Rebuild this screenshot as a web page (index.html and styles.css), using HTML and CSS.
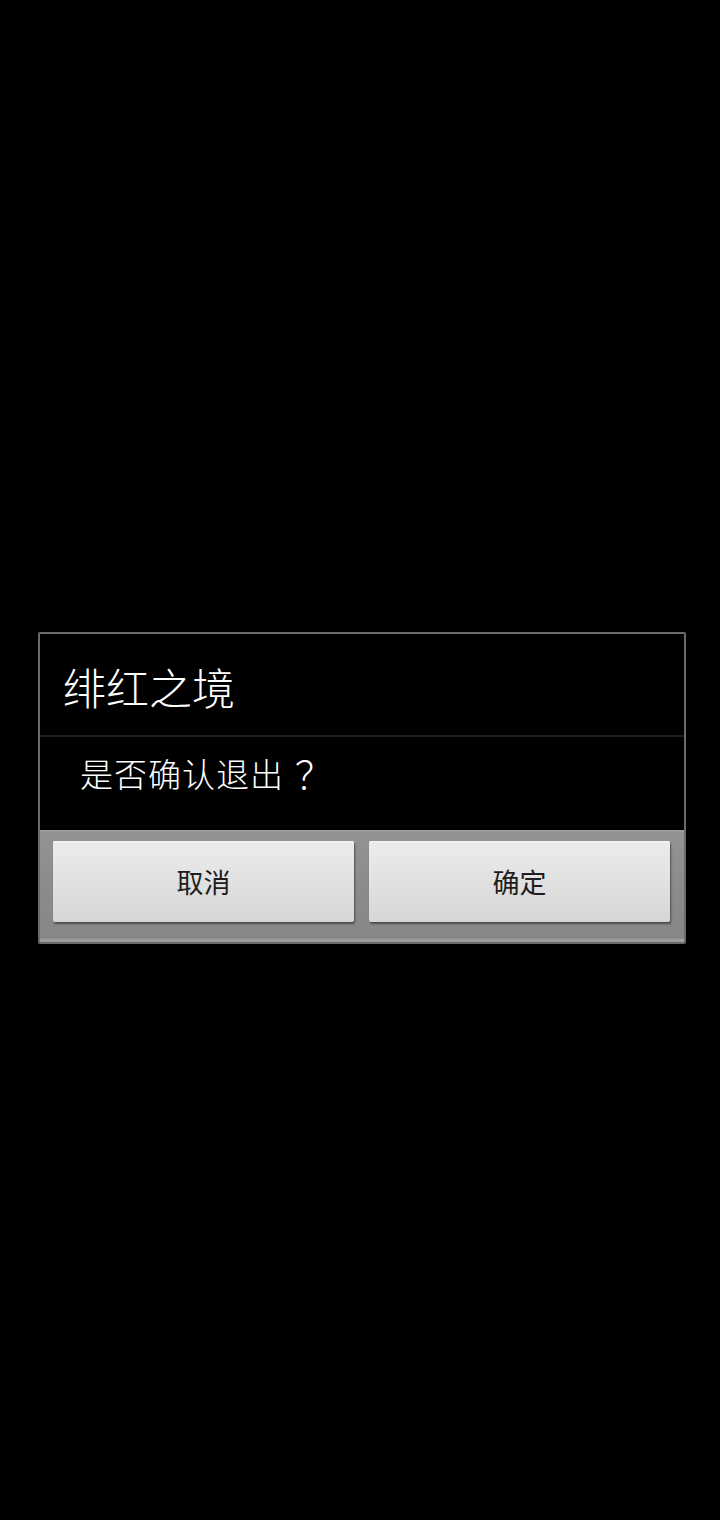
FILE: index.html
```html
<!DOCTYPE html>
<html lang="zh-CN">
<head>
<meta charset="utf-8">
<title>绯红之境</title>
<link rel="stylesheet" href="styles.css">
</head>
<body>
<div class="screen">
  <div class="dialog">
    <div class="title">绯红之境</div>
    <div class="divider"></div>
    <div class="message">是否确认退出<span class="q">？</span></div>
    <div class="buttons">
      <button class="btn">取消</button>
      <button class="btn">确定</button>
    </div>
  </div>
</div>
</body>
</html>
```
FILE: styles.css
```css
html, body {
  margin: 0;
  padding: 0;
  background: #000;
}
body {
  font-family: "Noto Sans CJK SC", "Noto Sans", sans-serif;
  width: 720px;
  height: 1520px;
}
.screen {
  padding-top: 632px;
  padding-left: 38px;
}
.dialog {
  width: 644px;
  border: 2px solid #6a6a6a;
  border-radius: 2px;
  background: #000;
}
.title {
  height: 101px;
  display: flex;
  align-items: center;
  padding-left: 23px;
  color: #fff;
  font-size: 43px;
  font-weight: 300;
  line-height: 1;
  padding-top: 4px;
  box-sizing: border-box;
}
.divider {
  height: 2px;
  background: #1e1e1e;
}
.message {
  height: 93px;
  display: flex;
  align-items: center;
  padding-left: 40px;
  padding-bottom: 20px;
  box-sizing: border-box;
  color: #fff;
  font-size: 33px;
  font-weight: 300;
  line-height: 1;
  letter-spacing: 1px;
}
.q {
  margin-left: 11px;
  font-size: 38px;
  margin-top: -2px;
}
.buttons {
  display: grid;
  grid-template-columns: 301px 301px;
  column-gap: 15px;
  padding: 11px 14px 20px 13px;
  background: linear-gradient(#a6a6a6 0, #939393 2px, #8a8a8a 60%, #878787 100%);
  box-shadow: inset 0 -3px 0 #9d9d9d, inset 0 -4px 0 #8e8e8e;
}
.btn {
  height: 81px;
  border: none;
  border-radius: 2px;
  background: linear-gradient(#ececec, #d6d6d6);
  box-shadow: 1px 2px 2px rgba(0, 0, 0, 0.45), inset 0 1px 0 #f4f4f4;
  font-family: "Noto Sans CJK SC", "Noto Sans", sans-serif;
  font-size: 27px;
  color: #1e1e1e;
  padding: 0;
  line-height: 1;
}
```
